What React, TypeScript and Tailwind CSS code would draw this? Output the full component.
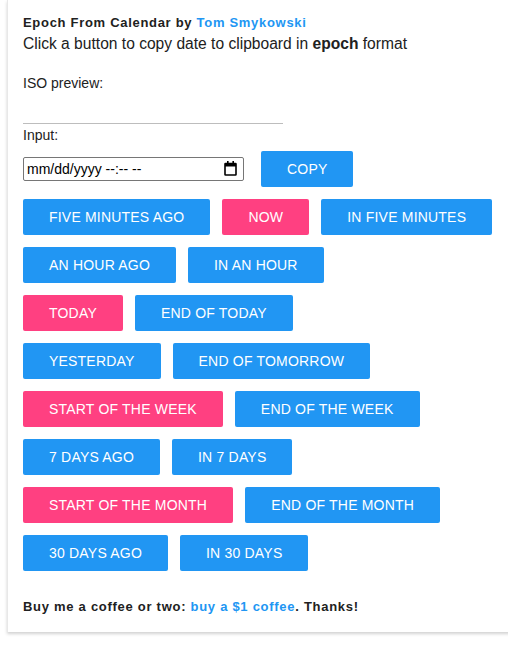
const rows: { label: string; accent?: boolean }[][] = [
  [{ label: "Five minutes ago" }, { label: "Now", accent: true }, { label: "In five minutes" }],
  [{ label: "An hour ago" }, { label: "In an hour" }],
  [{ label: "Today", accent: true }, { label: "End of today" }],
  [{ label: "Yesterday" }, { label: "End of tomorrow" }],
  [{ label: "Start of the week", accent: true }, { label: "End of the week" }],
  [{ label: "7 days ago" }, { label: "In 7 days" }],
  [{ label: "Start of the month", accent: true }, { label: "End of the month" }],
  [{ label: "30 days ago" }, { label: "In 30 days" }],
];

function Btn({ label, accent }: { label: string; accent?: boolean }) {
  return (
    <button
      className={
        "h-[36px] px-[26px] rounded-[2px] text-[14px] tracking-[0.2px] uppercase text-white leading-[36px] whitespace-nowrap " +
        (accent ? "bg-[#ff4081]" : "bg-[#2196f3]")
      }
    >
      {label}
    </button>
  );
}

function CalendarIcon() {
  return (
    <svg width="13" height="15" viewBox="0 0 13 15" className="absolute right-[7px] top-[4px] pointer-events-none">
      <rect x="1" y="2.5" width="11" height="11.5" fill="none" stroke="#000" strokeWidth="1.6" rx="0.5" />
      <rect x="1" y="2.5" width="11" height="3" fill="#000" />
      <rect x="3" y="0" width="1.6" height="3" fill="#000" />
      <rect x="8.4" y="0" width="1.6" height="3" fill="#000" />
    </svg>
  );
}

export default function App() {
  return (
    <div className="min-h-[649px] bg-white font-['Liberation_Sans',Arial,sans-serif] text-[#212121]">
      <div className="ml-[7px] w-[520px] bg-white border-l border-[#e8e8e8] shadow-[0_2px_3px_rgba(0,0,0,0.18)] pl-[15px] pr-[15px] pt-[13px] pb-[15px]">
        {/* header */}
        <h1 className="text-[13px] font-bold leading-[20px] tracking-[0.7px]">
          Epoch From Calendar by <a className="text-[#2196f3]">Tom Smykowski</a>
        </h1>
        <p className="text-[15.6px] leading-[21px]">
          Click a button to copy date to clipboard in <b>epoch</b> format
        </p>

        {/* preview */}
        <div className="mt-[19px] text-[14px] leading-[20px]">ISO preview:</div>
        <div className="w-[260px] h-[31px] border-b border-[#bdbdbd]"></div>

        {/* input */}
        <div className="mt-[2px] text-[14px] leading-[18px]">Input:</div>
        <div className="mt-[7px] flex items-center gap-[17px]">
          <div className="relative w-[221px] h-[24px]">
            <input
              type="text"
              placeholder="mm/dd/yyyy --:-- --"
              className="w-full h-full border border-[#767676] rounded-[2px] pl-[3px] text-[14px] text-black placeholder:text-black outline-none"
            />
            <CalendarIcon />
          </div>
          <Btn label="Copy" />
        </div>

        {/* shortcut buttons */}
        <div className="mt-[12px] flex flex-col gap-[12px]">
          {rows.map((row, i) => (
            <div key={i} className="flex gap-[12px]">
              {row.map((b) => (
                <Btn key={b.label} label={b.label} accent={b.accent} />
              ))}
            </div>
          ))}
        </div>

        <p className="mt-[26px] text-[13px] font-bold leading-[20px] tracking-[0.72px]">
          Buy me a coffee or two: <a className="text-[#2196f3]">buy a $1 coffee</a>. Thanks!
        </p>
      </div>
    </div>
  );
}
